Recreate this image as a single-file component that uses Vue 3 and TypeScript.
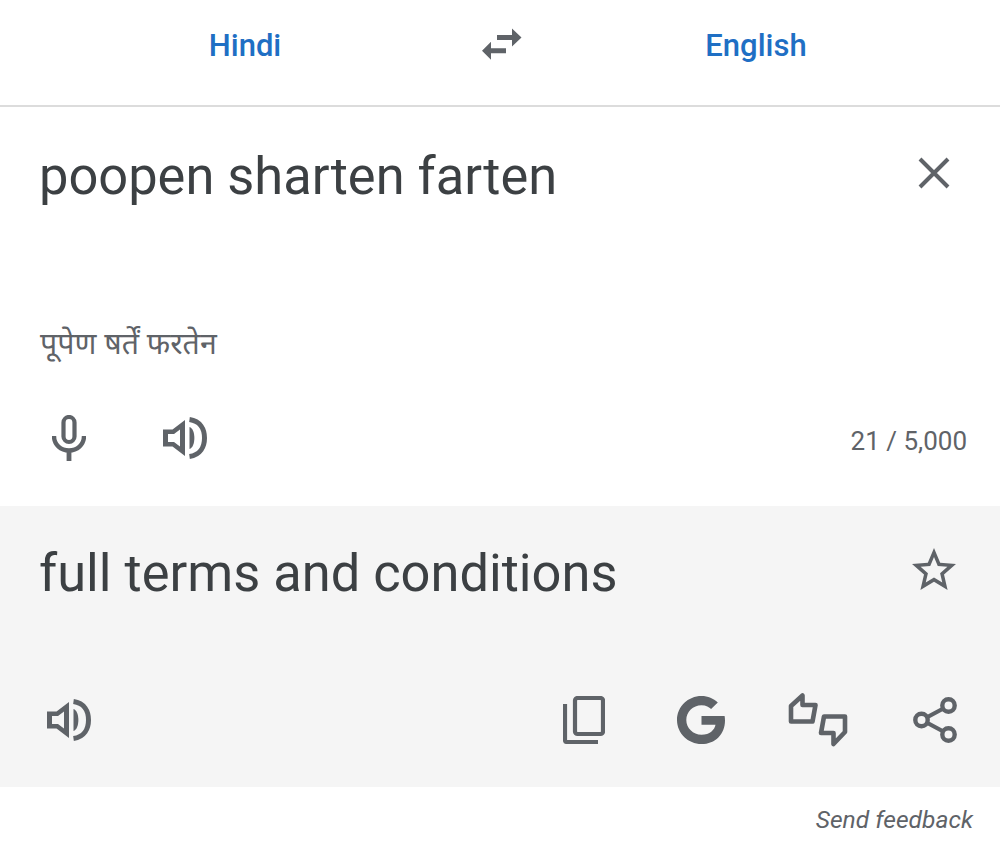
<script setup lang="ts">
const original = 'poopen sharten farten'
const transliteration = 'पूपेण षर्तें फरतेन'
const translation = 'full terms and conditions'
const counter = '21 / 5,000'
</script>

<template>
  <div class="page">
    <header class="lang-bar">
      <span class="lang">Hindi</span>
      <svg class="swap" width="40" height="32" viewBox="0 0 40 32">
        <path d="M15 7h15V.5l9.500 9-9.500 9V12H15zM24 20.300H9V13.800l-9 9 9 9v-6.500h15z" fill="#5f6368" />
      </svg>
      <span class="lang lang-right">English</span>
    </header>

    <section class="source">
      <div class="text-row">
        <div class="main-text">{{ original }}</div>
        <svg class="close" width="32" height="32" viewBox="0 0 32 32">
          <path d="M2 2l28 28M30 2L2 30" stroke="#5f6368" stroke-width="4" fill="none" />
        </svg>
      </div>
      <div class="translit">{{ transliteration }}</div>
      <div class="tools">
        <svg class="mic" width="34" height="46" viewBox="0 0 34 46">
          <rect x="11.500" y="2" width="11" height="25" rx="5.500" fill="none" stroke="#5f6368" stroke-width="4.200" />
          <path d="M2 21c0 9 7 14.500 15 14.500S32 30 32 21" fill="none" stroke="#5f6368" stroke-width="4.400" />
          <path d="M17 35v11" stroke="#5f6368" stroke-width="4.800" />
        </svg>
        <svg class="speaker" width="44" height="42" viewBox="0 0 44 42">
          <path d="M0 12.500h9.500L22 3v36L9.500 29.500H0z M5 17v8h6l6 4.500v-17L11 17z" fill="#5f6368" fill-rule="evenodd" />
          <path d="M26.500 10c6.500 2 6.500 20 0 22z" fill="#5f6368" />
          <path d="M26.500 2.500c11 1.500 15 10 15 18.500s-4 17-15 18.500" fill="none" stroke="#5f6368" stroke-width="5" />
        </svg>
        <span class="counter">{{ counter }}</span>
      </div>
    </section>

    <section class="result">
      <div class="text-row">
        <div class="main-text">{{ translation }}</div>
        <svg class="star" width="44" height="42" viewBox="2 2 20 19">
          <path d="M22 9.240l-7.190-.62L12 2 9.190 8.630 2 9.240l5.460 4.730L5.820 21 12 17.270 18.180 21l-1.630-7.030L22 9.240zM12 15.400l-3.760 2.270 1-4.280-3.320-2.880 4.380-.38L12 6.100l1.710 4.040 4.380.38-3.320 2.880 1 4.280L12 15.400z" fill="#5f6368" />
        </svg>
      </div>
      <div class="actions">
        <svg width="44" height="42" viewBox="0 0 44 42">
          <path d="M0 12.500h9.500L22 3v36L9.500 29.500H0z M5 17v8h6l6 4.500v-17L11 17z" fill="#5f6368" fill-rule="evenodd" />
          <path d="M26.500 10c6.500 2 6.500 20 0 22z" fill="#5f6368" />
          <path d="M26.500 2.500c11 1.500 15 10 15 18.500s-4 17-15 18.500" fill="none" stroke="#5f6368" stroke-width="5" />
        </svg>
        <div class="spacer"></div>
        <svg class="copy" width="42" height="48" viewBox="0 0 42 48">
          <rect x="12" y="2" width="28" height="36" rx="2.500" fill="none" stroke="#5f6368" stroke-width="4.200" />
          <path d="M2 8v36c0 1 .6 2 2 2h31" fill="none" stroke="#5f6368" stroke-width="4.200" />
        </svg>
        <svg class="google" width="48" height="48" viewBox="0 0 48 48">
          <path d="M24.500 20v8.700h14c-.8 5-5.700 10-14 10C16 38.700 9.300 32 9.300 24S16 9.300 24.500 9.300c4.600 0 7.700 2 9.600 3.700l6.700-6.500C36.400 2.400 31 0 24.500 0 11 0 0 10.700 0 24s11 24 24.500 24C38.300 48 48 38.200 48 24.400c0-1.700-.2-3.100-.4-4.400z" fill="#5f6368" />
        </svg>
        <svg class="rate" width="60" height="58" viewBox="0 0 60 58">
          <path d="M3 30.500V15L14.500 4.500V14h13l-3 16.500z" fill="none" stroke="#5f6368" stroke-width="4.600" stroke-linejoin="round" />
          <path d="M36 25.500h21V41L45.500 53V42H33z" fill="none" stroke="#5f6368" stroke-width="4.600" stroke-linejoin="round" />
        </svg>
        <svg class="share" width="44" height="46" viewBox="0 0 44 46">
          <path d="M35 9L9 23l26 14" fill="none" stroke="#5f6368" stroke-width="4.200" />
          <circle cx="35.500" cy="8.500" r="6.200" fill="#f5f5f5" stroke="#5f6368" stroke-width="4.400" />
          <circle cx="8.500" cy="23" r="6.200" fill="#f5f5f5" stroke="#5f6368" stroke-width="4.400" />
          <circle cx="35.500" cy="37.500" r="6.200" fill="#f5f5f5" stroke="#5f6368" stroke-width="4.400" />
        </svg>
      </div>
    </section>

    <footer class="feedback">Send feedback</footer>
  </div>
</template>

<style scoped>
.page {
  width: 1000px;
  height: 866px;
  background: #fff;
  font-family: Roboto, "Noto Sans", sans-serif;
  color: #3c4043;
  overflow: hidden;
}

.lang-bar {
  display: grid;
  grid-template-columns: 482px 40px 468px;
  align-items: center;
  height: 89px;
  border-bottom: 2px solid #dcdcdc;
  padding-bottom: 16px;
}

.lang {
  font-size: 31px;
  font-weight: 500;
  color: #1f6fc4;
  text-align: center;
  padding: 2px 0 0 8px;
}

.lang-right {
  padding-left: 0;
}

.swap {
  margin-top: -1px;
}

.source {
  height: 399px;
  padding: 0 50px 0 39px;
  box-sizing: border-box;
  display: flex;
  flex-direction: column;
}

.text-row {
  display: flex;
  justify-content: space-between;
  align-items: flex-start;
}

.main-text {
  font-size: 52.4px;
  line-height: 60px;
  padding-top: 39px;
}

.close {
  margin-top: 50px;
}

.translit {
  margin-top: 117px;
  padding-left: 1px;
  font-size: 30.3px;
  line-height: 40px;
  color: #5f6368;
  font-family: "Noto Sans", "Noto Sans Devanagari", sans-serif;
}

.tools {
  display: flex;
  align-items: center;
  margin-top: 52px;
  padding-left: 13px;
  margin-right: -17px;
}

.speaker {
  margin-left: 77px;
}

.counter {
  margin-left: auto;
  padding-top: 6px;
  font-size: 26px;
  color: #5f6368;
}

.result {
  height: 281px;
  background: #f5f5f5;
  padding: 0 43px 0 39px;
  box-sizing: border-box;
}

.result .main-text {
  padding-top: 37px;
}

.star {
  margin-top: 42px;
  margin-right: 1px;
}

.actions {
  display: flex;
  align-items: center;
  margin-top: 88px;
  margin-left: 8px;
}

.spacer {
  flex: 1;
}

.google {
  margin-left: 72px;
}

.rate {
  margin-left: 63px;
}

.share {
  margin-left: 65px;
}

.feedback {
  text-align: right;
  font-style: italic;
  font-size: 24.6px;
  line-height: 30px;
  color: #5f6368;
  padding: 18px 27px 0 0;
}
</style>
